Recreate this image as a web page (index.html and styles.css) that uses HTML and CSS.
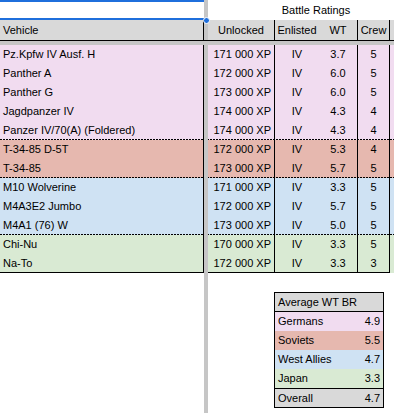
FILE: index.html
```html
<!DOCTYPE html>
<html lang="en">
<head>
  <meta charset="UTF-8" />
  <title>Tier IV Ground Vehicles</title>
  <link rel="stylesheet" href="styles.css">
</head>
<body>
  <div class="sheet">
    <!-- row 1: title -->
    <div class="row top">
      <div class="cell a selected"><span class="handle"></span></div>
      <div class="vbar"></div>
      <div class="cell title">Battle Ratings</div>
    </div>

    <!-- row 2: column headers -->
    <div class="row head">
      <div class="cell a">Vehicle</div>
      <div class="vbar"></div>
      <div class="cell b">Unlocked</div>
      <div class="cell c">Enlisted</div>
      <div class="cell d">WT</div>
      <div class="cell e">Crew</div>
      <div class="cell f"></div>
    </div>

    <div class="hbar"></div>

    <!-- Germans -->
    <div class="group germans">
      <div class="row"><div class="cell a">Pz.Kpfw IV Ausf. H</div><div class="vbar"></div><div class="cell b">171 000 XP</div><div class="cell c">IV</div><div class="cell d">3.7</div><div class="cell e">5</div><div class="cell f"></div></div>
      <div class="row"><div class="cell a">Panther A</div><div class="vbar"></div><div class="cell b">172 000 XP</div><div class="cell c">IV</div><div class="cell d">6.0</div><div class="cell e">5</div><div class="cell f"></div></div>
      <div class="row"><div class="cell a">Panther G</div><div class="vbar"></div><div class="cell b">173 000 XP</div><div class="cell c">IV</div><div class="cell d">6.0</div><div class="cell e">5</div><div class="cell f"></div></div>
      <div class="row"><div class="cell a">Jagdpanzer IV</div><div class="vbar"></div><div class="cell b">174 000 XP</div><div class="cell c">IV</div><div class="cell d">4.3</div><div class="cell e">4</div><div class="cell f"></div></div>
      <div class="row dashed"><div class="cell a">Panzer IV/70(A) (Foldered)</div><div class="vbar"></div><div class="cell b">174 000 XP</div><div class="cell c">IV</div><div class="cell d">4.3</div><div class="cell e">4</div><div class="cell f"></div></div>
    </div>

    <!-- Soviets -->
    <div class="group soviets">
      <div class="row"><div class="cell a">T-34-85 D-5T</div><div class="vbar"></div><div class="cell b">172 000 XP</div><div class="cell c">IV</div><div class="cell d">5.3</div><div class="cell e">4</div><div class="cell f"></div></div>
      <div class="row dashed"><div class="cell a">T-34-85</div><div class="vbar"></div><div class="cell b">173 000 XP</div><div class="cell c">IV</div><div class="cell d">5.7</div><div class="cell e">5</div><div class="cell f"></div></div>
    </div>

    <!-- West Allies -->
    <div class="group allies">
      <div class="row"><div class="cell a">M10 Wolverine</div><div class="vbar"></div><div class="cell b">171 000 XP</div><div class="cell c">IV</div><div class="cell d">3.3</div><div class="cell e">5</div><div class="cell f"></div></div>
      <div class="row"><div class="cell a">M4A3E2 Jumbo</div><div class="vbar"></div><div class="cell b">172 000 XP</div><div class="cell c">IV</div><div class="cell d">5.7</div><div class="cell e">5</div><div class="cell f"></div></div>
      <div class="row dashed"><div class="cell a">M4A1 (76) W</div><div class="vbar"></div><div class="cell b">173 000 XP</div><div class="cell c">IV</div><div class="cell d">5.0</div><div class="cell e">5</div><div class="cell f"></div></div>
    </div>

    <!-- Japan -->
    <div class="group japan">
      <div class="row"><div class="cell a">Chi-Nu</div><div class="vbar"></div><div class="cell b">170 000 XP</div><div class="cell c">IV</div><div class="cell d">3.3</div><div class="cell e">5</div><div class="cell f"></div></div>
      <div class="row last"><div class="cell a">Na-To</div><div class="vbar"></div><div class="cell b">172 000 XP</div><div class="cell c">IV</div><div class="cell d">3.3</div><div class="cell e">3</div><div class="cell f"></div></div>
    </div>

    <!-- empty rows below, with the averages box -->
    <div class="below">
      <div class="cell a blank"></div>
      <div class="vbar"></div>
      <div class="rest">
        <div class="summary">
          <div class="srow shead"><span>Average WT BR</span></div>
          <div class="srow germans"><span>Germans</span><span>4.9</span></div>
          <div class="srow soviets"><span>Soviets</span><span>5.5</span></div>
          <div class="srow allies"><span>West Allies</span><span>4.7</span></div>
          <div class="srow japan"><span>Japan</span><span>3.3</span></div>
          <div class="srow total"><span>Overall</span><span>4.7</span></div>
        </div>
      </div>
    </div>
  </div>
</body>
</html>
```

FILE: styles.css
```css
* {
  box-sizing: border-box;
  margin: 0;
  padding: 0;
}

body {
  background: #fff;
  font-family: 'Liberation Sans', Arial, sans-serif;
  font-size: 11px;
  color: #000;
}

.sheet {
  display: flex;
  flex-direction: column;
  min-height: 100vh;
  overflow: hidden;
}

.row {
  display: flex;
  height: 19px;
  line-height: 19px;
}

.cell {
  white-space: nowrap;
  overflow: hidden;
}

/* column widths */
.a { width: 204px; flex: none; padding-left: 3px; border-right: 1px solid #000; }
.b { width: 67px; flex: none; text-align: right; padding-right: 3px; border-right: 1px solid #000; }
.c { width: 44px; flex: none; text-align: center; }
.d { width: 39px; flex: none; text-align: center; border-right: 1px solid #000; }
.e { width: 32px; flex: none; text-align: center; border-right: 1px solid #000; }
.f { flex: 1; }

/* frozen pane splitters */
.vbar {
  width: 4px;
  flex: none;
  background: #c6c6c6;
}

.hbar {
  height: 4px;
  background: #c6c6c6;
}

/* row 1 */
.row.top {
  height: 20px;
  line-height: 20px;
}

.row.top .a {
  border-right: none;
}

.selected {
  position: relative;
  overflow: visible;
  border-top: 2px solid #1f6fdc;
  border-bottom: 2px solid #1f6fdc;
  border-right: 2px solid #1f6fdc;
}

.handle {
  position: absolute;
  right: -6px;
  bottom: -6px;
  width: 7px;
  height: 7px;
  border-radius: 50%;
  background: #1f6fdc;
  border: 1px solid #fff;
  z-index: 2;
}

.title {
  width: 216px;
  flex: none;
  text-align: center;
}

/* row 2 */
.row.head {
  height: 21px;
  line-height: 20px;
  background: #d9d9d9;
  border-bottom: 1px solid #000;
}

.row.head .b {
  text-align: center;
  padding-right: 0;
}

/* data groups */
.germans { background: #f1dcf0; }
.soviets { background: #e6b8af; }
.allies { background: #cfe2f3; }
.japan { background: #d9ead3; }

.row.dashed {
  background-image: repeating-linear-gradient(90deg, #000 0 2px, transparent 2px 3px);
  background-size: 100% 1px;
  background-position: left bottom;
  background-repeat: no-repeat;
}

.row.last .a,
.row.last .b,
.row.last .c,
.row.last .d,
.row.last .e {
  border-bottom: 1px solid #000;
}

.row.last .f {
  height: 18px;
}

/* lower area */
.below {
  flex: 1;
  display: flex;
  background: #fff;
}

.below .blank {
  border-right: none;
}

.rest {
  flex: 1;
  padding: 19px 0 0 66px;
}

.summary {
  width: 110px;
  border: 1px solid #000;
}

.srow {
  display: flex;
  justify-content: space-between;
  height: 19px;
  line-height: 19px;
  padding: 0 3px;
}

.shead,
.total {
  background: #d9d9d9;
}

.shead {
  height: 19px;
  line-height: 18px;
  border-bottom: 1px solid #000;
}

.total {
  height: 19px;
  line-height: 18px;
  border-top: 1px solid #000;
}
```
